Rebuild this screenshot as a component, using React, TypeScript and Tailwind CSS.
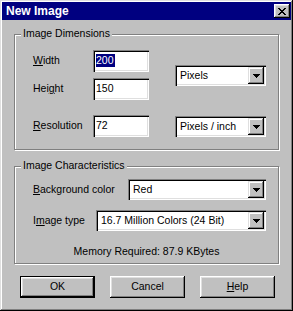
import React from "react";

const font = { fontFamily: '"Liberation Sans", Arial, sans-serif' };

function Arrow() {
  return (
    <div className="flex h-full w-[16px] items-center justify-center bg-[#c0c0c0] shadow-[inset_-1px_-1px_#000,inset_1px_1px_#dfdfdf,inset_-2px_-2px_#808080,inset_2px_2px_#fff]">
      <svg width="7" height="4" viewBox="0 0 7 4" shapeRendering="crispEdges">
        <path d="M0 0H7V1H6V2H5V3H4V4H3V3H2V2H1V1H0Z" fill="#000" />
      </svg>
    </div>
  );
}

function Select({ value, width }: { value: string; width: string }) {
  return (
    <div
      className={`flex h-[21px] ${width} bg-white p-[2px] shadow-[inset_1px_1px_#808080,inset_2px_2px_#000,inset_-1px_-1px_#fff,inset_-2px_-2px_#dfdfdf]`}
    >
      <div className="flex flex-1 items-center pl-[3px] leading-[13px]">{value}</div>
      <Arrow />
    </div>
  );
}

function Edit({ children }: { children: React.ReactNode }) {
  return (
    <div className="flex h-[22px] w-[56px] items-center bg-white pb-[1px] pl-[3px] leading-[13px] shadow-[inset_1px_1px_#808080,inset_2px_2px_#000,inset_-1px_-1px_#fff,inset_-2px_-2px_#dfdfdf]">
      {children}
    </div>
  );
}

function Group({
  title,
  height,
  className,
  children,
}: {
  title: string;
  height: string;
  className: string;
  children: React.ReactNode;
}) {
  return (
    <div
      className={`relative mx-[12px] ${className} ${height} border border-[#808080] shadow-[1px_1px_0_#fff,inset_1px_1px_0_#fff]`}
    >
      <span className="absolute -top-[8px] left-[6px] bg-[#c0c0c0] px-[2px] leading-[13px]">
        {title}
      </span>
      {children}
    </div>
  );
}

function Button({ children, primary }: { children: React.ReactNode; primary?: boolean }) {
  return (
    <div
      className={`flex h-[22px] w-[75px] items-center justify-center bg-[#c0c0c0] ${
        primary
          ? "border border-black shadow-[inset_-1px_-1px_#000,inset_1px_1px_#fff,inset_-2px_-2px_#808080,inset_2px_2px_#dfdfdf]"
          : "shadow-[inset_-1px_-1px_#000,inset_1px_1px_#fff,inset_-2px_-2px_#808080,inset_2px_2px_#dfdfdf]"
      }`}
    >
      {children}
    </div>
  );
}

export default function App() {
  return (
    <div
      style={font}
      className="h-[311px] w-[293px] bg-[#c0c0c0] p-[2px] text-[10.5px] text-black shadow-[inset_-1px_-1px_#000,inset_1px_1px_#dfdfdf,inset_-2px_-2px_#808080,inset_2px_2px_#fff]"
    >
      <div className="flex h-[18px] items-center justify-between bg-[#000080] pl-[4px] pr-[1px]">
        <span className="text-[12px] font-bold leading-[14px] text-white">New Image</span>
        <div className="flex h-[14px] w-[16px] items-center justify-center bg-[#c0c0c0] shadow-[inset_-1px_-1px_#000,inset_1px_1px_#fff,inset_-2px_-2px_#808080,inset_2px_2px_#dfdfdf]">
          <svg width="8" height="7" viewBox="0 0 8 7" shapeRendering="crispEdges">
            <path
              d="M0 0H2V1H3V2H5V1H6V0H8V1H7V2H6V3H5V4H6V5H7V6H8V7H6V6H5V5H3V6H2V7H0V6H1V5H2V4H3V3H2V2H1V1H0Z"
              fill="#000"
            />
          </svg>
        </div>
      </div>

      <Group title="Image Dimensions" height="h-[116px]" className="mt-[14px]">
        <div className="flex pl-[18px] pt-[15px]">
          <div className="flex flex-col">
            <div className="flex h-[22px] items-center">
              <span className="w-[60px]">
                <u>W</u>idth
              </span>
              <Edit>
                <span className="bg-[#000080] pr-[1px] text-white">200</span>
              </Edit>
            </div>
            <div className="mt-[6px] flex h-[22px] items-center">
              <span className="w-[60px]">
                Hei<u>g</u>ht
              </span>
              <Edit>150</Edit>
            </div>
            <div className="mt-[15px] flex h-[22px] items-center">
              <span className="w-[60px]">
                <u>R</u>esolution
              </span>
              <Edit>72</Edit>
            </div>
          </div>
          <div className="ml-[26px] flex flex-col">
            <div className="mt-[15px]">
              <Select value="Pixels" width="w-[91px]" />
            </div>
            <div className="mt-[30px]">
              <Select value="Pixels / inch" width="w-[91px]" />
            </div>
          </div>
        </div>
      </Group>

      <Group title="Image Characteristics" height="h-[98px]" className="mt-[16px]">
        <div className="flex flex-col pl-[18px] pt-[12px]">
          <div className="flex h-[21px] items-center">
            <span className="w-[95px]">
              <u>B</u>ackground color
            </span>
            <Select value="Red" width="w-[138px]" />
          </div>
          <div className="mt-[10px] flex h-[21px] items-center">
            <span className="w-[63px]">
              I<u>m</u>age type
            </span>
            <Select value="16.7 Million Colors (24 Bit)" width="w-[170px]" />
          </div>
        </div>
        <div className="mt-[14px] text-center leading-[13px]">Memory Required: 87.9 KBytes</div>
      </Group>

      <div className="mt-[12px] flex gap-[15px] pl-[18px]">
        <Button primary>OK</Button>
        <Button>Cancel</Button>
        <Button>
          <span>
            <u>H</u>elp
          </span>
        </Button>
      </div>
    </div>
  );
}
